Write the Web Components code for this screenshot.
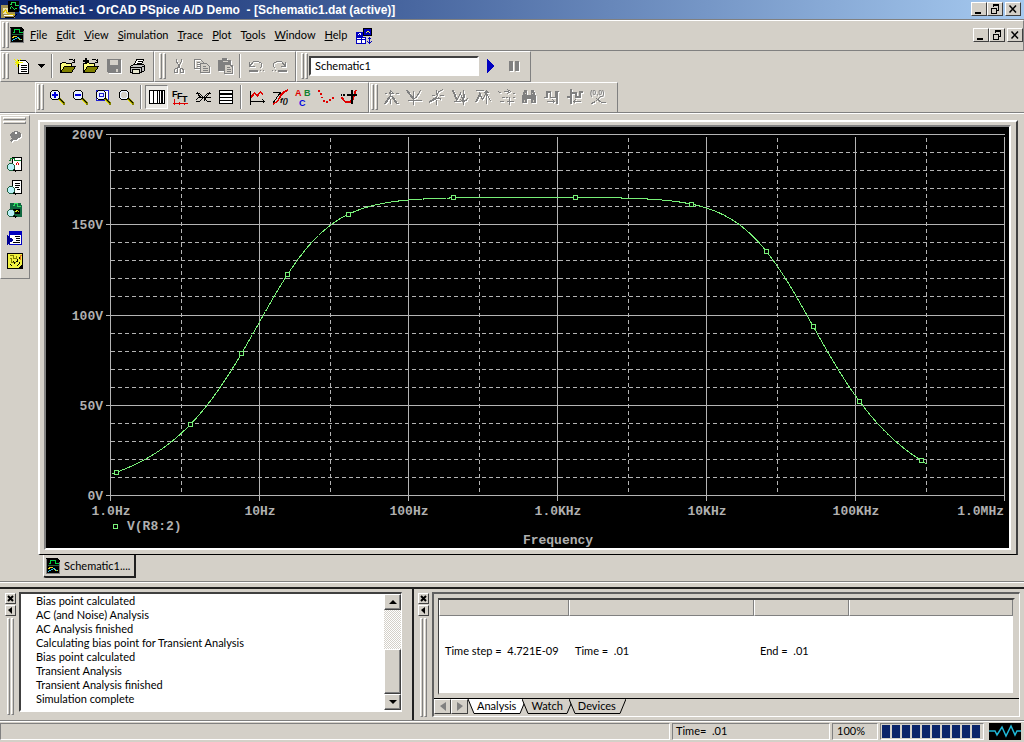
<!DOCTYPE html>
<html lang="en">
<head>
<meta charset="utf-8">
<title>Schematic1 - OrCAD PSpice A/D Demo</title>
<style>
html,body{margin:0;height:100%}
body{background:#d4d0c8;color:#000;font:11px/14px Lato,"Liberation Sans",Arial,sans-serif}
</style>
</head>
<body>
<pspice-app></pspice-app>
<script>
const define=(name,css,html,setup)=>{
  const t=document.createElement('template');
  t.innerHTML=`<style>*{box-sizing:border-box}button{font:inherit;color:inherit;border:0;padding:0;margin:0;background:none}${css}</style>${html}`;
  customElements.define(name,class extends HTMLElement{
    constructor(){super();this.attachShadow({mode:'open'}).append(t.content.cloneNode(true));}
    connectedCallback(){if(setup)setup.call(this,this.shadowRoot);}
  });
};

/* icon drawing helpers: fl = filled area, ln = one pixel pen with optional fill, tx = small lettering */
const fl=(c,d)=>`<path fill="${c}" d="${d}"/>`;
const ln=(c,d,fill='none',w=1)=>`<path transform="translate(.5 .5)" stroke="${c}" stroke-width="${w}" fill="${fill}" d="${d}"/>`;
const tx=(c,x,y,s,t,f='bold',fam='Liberation Sans')=>`<text x="${x}" y="${y}" fill="${c}" style="font:${f} ${s}px '${fam}',sans-serif">${t}</text>`;
const K='#000',G='#808080',W='#fff',R='#e00000',B='#0000c0';
const lens=inner=>fl('#808000','M9 9H11L16 14V16H14L9 11Z')+ln(K,'M10 9L15 14')+ln('#e8e000','M10 11L14 15')+`<circle cx="6" cy="6" r="5" fill="#e8f0ff" stroke="#000"/>`+inner;
const folder=ln(K,'M0 14V5H1L2 4H5L6 5H11V8','#ffff80')+ln(K,'M0 14L4 8H15L11 14Z','#808000')+ln(K,'M8 2L9 1H12L14 3M14 0V4H11');
const doc=fl(K,'M0 0H11L14 3V16H0Z')+ln(G,'M0 0V15H13V3')+ln('#00d040','M2 5H4V2H9V5H12')+ln('#206040','M1 7H12')+ln('#e0d020','M2 10L4 9H6L9 12H11')+ln('#20c0f0','M2 13L5 11L8 10L11 13');
const tinyLens=ln(K,'M6 13L9 15',K,2)+`<circle cx="4" cy="11" r="3.5" fill="#b8f0f8" stroke="#206040"/>`;
const icons={
 doc,
 app:fl('#a09050','M0 4H14V17H0Z')+fl(K,'M7 0H18V11H7Z')+ln('#20d050','M8 3H10V1H14V4H17M8 8L10 5L13 8L16 6')+fl('#e8e0b0','M2 7H7V13H2Z')+ln(W,'M2 14H11')+ln('#e0c000','M1 12L4 8L6 12L9 13H13')+ln(K,'M3 16H12L15 13'),
 mdi:fl(B,'M7 0H16V7H7Z')+ln(K,'M7 0H15V7H7Z')+ln('#ffff40','M9 5L11 3H12L14 5')+fl(B,'M0 4H7V9H0Z')+ln(W,'M1 7L3 5L5 6')+ln(B,'M0 9H9V15H0ZM0 11H9M5 9V15',W)+ln(B,'M13 9V15M11 11L13 9L15 11M11 13L13 15L15 13'),
 new:ln(K,'M4 2H11L14 5V15H4Z',W)+ln(K,'M6 7H12M6 9H12M6 11H12M6 13H12')+ln('#f0f000','M3 0V8M0 4H8M0 1L6 7M6 1L0 7'),
 drop:fl(K,'M4 6H12L8 10Z'),
 open:folder,
 append:folder+fl(K,'M0 2H2V0H4V2H6V4H4V6H2V4H0Z'),
 save:fl(G,'M1 1H15V15H2L1 14Z')+fl('#d4d0c8','M4 2H12V7H4Z')+fl('#d4d0c8','M10 11H12V14H10Z'),
 print:ln(K,'M5 6L7 1H14L12 6',W)+ln(K,'M8 3H12M7 5H11')+ln(K,'M1 8L4 6H14L15 7V12L12 14H1Z','#c0c0c0')+ln(K,'M1 9H12V14M12 9L15 7')+ln(K,'M3 11H10V15H3Z','#e8e8d0'),
 cut:ln(G,'M5 0V3L9 10M10 0V3L6 10')+ln(G,'M4 10H6V14H3V11ZM9 10H11L12 12V14H9Z'),
 copy:ln(G,'M0 1H6L9 4V10H0Z')+ln(G,'M2 4H5M2 6H6M2 8H6')+ln(G,'M6 5H12L15 8V14H6Z','#d4d0c8')+ln(G,'M8 8H11M8 10H13M8 12H13'),
 paste:fl(G,'M1 2H5V0H10V2H14V7H16V15H8V13H1Z')+ln('#d4d0c8','M5 3H10')+ln(G,'M7 6H12L15 9V15H7Z','#d4d0c8')+ln(G,'M9 9H12M9 11H13M9 13H13'),
 undo:ln(G,'M1 3V8H6M1 8L5 3H10L13 5V8L11 10')+ln(G,'M0 12H9M11 12H12M14 12H15M0 13H9'),
 redo:ln(G,'M14 3V8H9M14 8L10 3H5L2 5V8L4 10')+ln(G,'M6 12H15M0 12H1M3 12H4M6 13H15'),
 play:fl('#0000c0','M4 1L12 8L4 15Z'),
 pause:fl(G,'M3 3H7V13H3ZM9 3H13V13H9Z'),
 zin:lens(fl('#0000e0','M3 5H5V3H7V5H9V7H7V9H5V7H3Z')),
 zout:lens(fl('#0000e0','M3 5H9V7H3Z')),
 zarea:ln('#2020d0','M1 1H13V11H1Z',W)+lens(ln('#2020d0','M4 4H8V7H4Z')),
 zfit:lens(fl('#d4d0c8','M3 4H4V3H8V4H9V8H8V9H4V8H3Z')),
 logx:ln(K,'M0 1H15V14H0Z',W)+ln(K,'M4 1V14M8 1V14M10 1V14M12 1V14M13 1V14'),
 fft:ln(R,'M0 14H15M2 9V15M7 12V15M12 13V15')+tx(K,0,8,9,'F')+tx(K,5,10,9,'F')+tx(K,10,13,9,'T'),
 perf:ln(K,'M0 4L4 4L12 12H15M0 12H4L12 4H15M2 3L5 9M14 3L8 12M1 10L7 5M4 8H15'),
 logy:ln(K,'M1 1H14V14H1Z',W)+ln(K,'M1 4H14M1 5H14M1 8H14M1 11H14'),
 trace:ln(K,'M1 1V15M0 12H15M13 10L15 12L13 14')+fl(R,'M2 7L5 3H6L8 6L11 2H12L14 5V7L11.500 4L8.500 8H8L5.500 5L3 9H2Z'),
 eval:ln(K,'M0 3H7M0 14L8 3M8 3V8M3 3H8')+fl(R,'M1 14L5 12L9 4L12 2L16 0V2L12 4L10 6L6 13L1 16Z')+tx(K,8,14,8,'f()','italic bold'),
 label:tx('#e00000',0,7,9,'A')+tx('#108030',9,7,9,'B')+tx('#0000e0',4,17,9,'C'),
 pts:fl(R,'M0 1H2V3H0ZM2 4H4V6H2ZM3 8H5V9H3ZM5 11H7V13H5ZM8 12H10V14H8ZM11 10H13V12H11ZM14 8H16V10H14Z'),
 cursor:fl(R,'M0 8H2L4 12H8L11 9L14 1H16L13 10L9 14H4L1 11Z')+fl(K,'M10 1H12V5H16V7H12V15H10V7H6V5H10ZM0 5H1V7H0ZM2 5H4V7H2Z'),
 c1:ln(G,'M1 4H3M5 4H10M12 4H15M7 0V7M7 7L2 14H0M8 7L13 14H15M7 2L5 5M8 2L10 5M7 9V14M6 7L1 14M9 7L14 14'),
 c2:ln(G,'M1 11H15M7 1V15M0 1L6 9M1 1L7 9M14 1L9 9M4 6L7 10L11 6'),
 c3:ln(G,'M7 0V5M7 10V15M0 12L7 8L9 2L14 0M0 13L7 9M2 6H5M10 6H14M9 8L12 11M3 9H11'),
 c4:ln(G,'M0 1L4 11L8 4L11 12M1 1L5 11M1 12H8M11 0V15M8 10L11 13L15 9M12 4V8M9 11H14'),
 c5:ln(G,'M0 13L4 4L7 10L11 3L15 12M1 13L5 4M0 1H8M11 0V14M8 4L11 1L14 4M9 3H13'),
 c6:ln(G,'M0 2L3 4M3 8H6M5 2H10M9 0L12 2L9 4M9 1H10M9 3H10M1 12H5M7 8H9M8 12H15M11 7V15M14 4H16M14 8H16'),
 find:fl(G,'M3 1H6V6H10V1H13L15 8V14H10V10H6V14H1V8Z')+ln('#d4d0c8','M3 10V12M12 10V12M4 3V4M11 3V4'),
 c8:fl(G,'M0 8H2V2H7V8H11V2H15V3H14V15H12V9H6V4H4V9H0Z')+ln(G,'M2 12H10M8 10L10 12L8 14'),
 c9:fl(G,'M3 0H5V15H3V9H0V7H3V3H10V7H12V2H16V4H14V9H8V5H5V3H3Z')+ln(G,'M6 12H13M8 10L6 12L8 14'),
 c10:tx(G,0,6,7,'(0,0)')+ln(G,'M1 14L5 12L9 8L12 6M6 9L11 13H15'),
 pin:`<ellipse cx="9" cy="7" rx="5" ry="4" fill="#808080"/>`+fl(W,'M8 4H10V6H8Z')+ln(G,'M3 6L6 10L10 11M6 10L3 13','none',2),
 view1:ln(K,'M5 1H14V14H5Z',W)+ln('#108030','M1 4H3V2H7V4H13')+ln(R,'M8 9L10 6L12 9')+tinyLens,
 view2:ln(K,'M5 1H14V14H5Z',W)+ln(K,'M7 4H12M7 6H12M7 8H11M9 10H12')+tinyLens,
 view3:fl('#106840','M3 1H14L15 4V15H4Z')+ln('#30e060','M5 3H7V1H10V4H13')+fl(K,'M6 7H13V12H6Z')+ln('#d0e020','M8 9L10 8L12 10')+tinyLens,
 netlist:fl('#0000c0','M2 1H15V4H2Z')+ln('#0000c0','M2 4H14V14H2Z',W)+ln(K,'M7 6H12M8 8H12M8 10H12M5 12H12')+fl('#000090','M0 5L7 10L0 15Z'),
 sim:fl(K,'M0 0H16V16H0Z')+fl('#f0f040','M1 1H15V11L11 15H1Z')+ln('#808000','M2 2H6V5H9V2M2 5H4V9H8')+ln(K,'M6 8L8 11M10 5V8H8M3 11L5 13M12 8V10L9 13M12 3V5')+ln('#e07020','M12 2H14M13 2V6'),
};
customElements.define('px-icon',class extends HTMLElement{
 constructor(){super();this.attachShadow({mode:'open'});}
 connectedCallback(){const s=+this.getAttribute('size')||16;
  this.shadowRoot.innerHTML=`<style>:host{display:block;flex:none;width:${s}px;height:${s}px}:host([off]){filter:drop-shadow(1px 1px 0 #fff)}svg{display:block;overflow:visible}</style><svg width="${s}" height="${s}" viewBox="0 0 ${s} ${s}" shape-rendering="crispEdges" aria-hidden="true">${icons[this.getAttribute('name')]||''}</svg>`;}
});

define('tool-button',`:host{display:block;flex:none;width:23px;height:24px}:host([narrow]){width:15px}
button{width:100%;height:100%;display:grid;place-items:center}
button.on{border:1px solid;border-color:#808080 #fff #fff #808080;background:#ebe9e4}`,
`<button><px-icon></px-icon></button>`,function(r){
  const i=r.querySelector('px-icon'),b=r.querySelector('button'),n=this.getAttribute('icon');
  i.setAttribute('name',n);b.setAttribute('aria-label',this.getAttribute('label')||n);
  if(this.hasAttribute('off')){b.disabled=true;i.toggleAttribute('off',true);}
  if(this.hasAttribute('on')){b.className='on';b.setAttribute('aria-pressed','true');}
  i.connectedCallback();
});
define('tool-sep',`:host{display:block;flex:none;width:8px;padding:0 3px}div{height:24px;border-left:1px solid #808080;border-right:1px solid #fff}`,`<div></div>`);
define('grip-bar',`:host{display:flex;gap:1px;flex:none;width:7px}:host([flat]){flex-direction:column;width:auto;height:7px}
i{flex:1;border:1px solid;border-color:#fff #808080 #808080 #fff}`,`<i></i><i></i>`);
define('tool-band',`:host{display:flex;align-items:center;height:31px;padding:0 5px 2px 4px;border:1px solid;border-color:#fff #808080 #808080 #fff}
:host([first]){padding-left:1px}:host([wide]){flex:1;padding-right:0}
grip-bar{height:26px;margin-right:1px}:host([snug]){padding:0 8px 2px 1px}`,`<grip-bar></grip-bar><slot></slot>`);

define('caption-buttons',`:host{display:flex;flex:none}button{width:16px;height:14px;background:#d4d0c8;border:1px solid;border-color:#fff #404040 #404040 #fff;display:grid;place-items:center}
button:last-child{margin-left:2px}svg{display:block}`,
`<button aria-label="Minimize"><svg width="12" height="10"><path d="M2 8H8V10H2Z"/></svg></button><button aria-label="Restore"><svg width="12" height="10" fill="none" stroke="#000" shape-rendering="crispEdges"><path d="M4 1H10M4 2.5V.5M4.5 2V.5H9.5V6H7M2.5 4H7.5V9.5H2.5ZM2 4.5H8"/></svg></button><button aria-label="Close"><svg width="12" height="10"><path stroke="#000" stroke-width="1.5" d="M2.500 1.500L9 8.500M9 1.500L2.500 8.500"/></svg></button>`);
define('title-bar',`:host{display:flex;align-items:center;height:19px;padding:0 3px 0 1px;color:#fff;background:linear-gradient(90deg,#0a246a,#a6caf0)}
h1{flex:1;margin:0;font:bold 12px/16px "Liberation Sans",Arial,sans-serif;white-space:pre;overflow:hidden}caption-buttons{margin-bottom:2px}`,
`<px-icon name="app" size="18"></px-icon><h1><slot></slot></h1><caption-buttons></caption-buttons>`);
define('menu-bar',`:host{display:flex;border-top:1px solid #808080}nav{display:flex;flex:1;gap:9px;padding:0 4px}button{height:18px}
nav px-icon{margin-top:2px}`,
`<tool-band wide first><px-icon name="doc"></px-icon><nav><button><u>F</u>ile</button><button><u>E</u>dit</button><button><u>V</u>iew</button><button><u>S</u>imulation</button><button><u>T</u>race</button><button><u>P</u>lot</button><button>T<u>o</u>ols</button><button><u>W</u>indow</button><button><u>H</u>elp</button><px-icon name="mdi"></px-icon></nav><caption-buttons></caption-buttons></tool-band>`);
const tb=(list,off)=>list.split(' ').map(n=>`<tool-button icon="${n}"${off?' off':''}></tool-button>`).join('');
define('tool-rows',`:host{display:block;border-bottom:1px solid #fff}div{display:flex}.second{padding-left:35px;box-shadow:inset 0 -1px #808080}
input{width:170px;height:20px;padding:0 4px;border:2px solid;border-color:#404040 #fff #fff #404040;background:#fff;font:inherit;outline:0}`,
`<div><tool-band first>${tb('new')}<tool-button narrow icon="drop" label="New options"></tool-button><tool-sep></tool-sep>${tb('open append')}${tb('save',1)}${tb('print')}</tool-band>
<tool-band>${tb('cut copy paste',1)}<tool-sep></tool-sep>${tb('undo redo',1)}</tool-band>
<tool-band><input aria-label="Simulation profile" value="Schematic1">${tb('play')}${tb('pause',1)}</tool-band></div>
<div class="second"><tool-band snug>${tb('zin zout zarea zfit')}<tool-sep></tool-sep><tool-button icon="logx" on></tool-button>${tb('fft perf logy')}<tool-sep></tool-sep>${tb('trace eval label pts cursor')}</tool-band>
<tool-band snug>${tb('c1 c2 c3 c4 c5 c6 find c8 c9 c10',1)}</tool-band></div>`);

define('side-bar',`:host{display:flex;flex-direction:column;align-items:center;align-self:flex-start;flex:none;width:30px;margin-top:1px;padding:1px 1px 6px 0;border:1px solid;border-color:#fff #808080 #808080 #fff}
grip-bar{align-self:stretch;margin:0 2px}tool-button{height:23px}.g{display:flex;flex-direction:column}.g+.g{margin-top:5px}`,
`<grip-bar flat></grip-bar><div class="g">${tb('pin',1)}</div><div class="g">${tb('view1 view2 view3')}</div><div class="g">${tb('netlist sim')}</div>`);

/* Frequency response chart, redrawn to the size of its box */
define('bode-plot',`:host{display:block;flex:1;min-height:200px;background:#000;overflow:hidden;position:relative}
svg{position:absolute;inset:0;width:100%;height:100%}
text{font:bold 13px "Liberation Mono","Courier New",monospace;fill:#b0b0b0}`,`<svg role="img" aria-label="V(R8:2) against frequency"></svg>`,function(r){
 const svg=r.querySelector('svg');
 const gain=f=>165.3/Math.hypot(1,14/f)/Math.hypot(1,f/36000)/Math.hypot(1,f/600000);
 const draw=()=>{
  const w=this.clientWidth,h=this.clientHeight,L=64,T=7,X=w-5,Y=h-53,px=Math.round;
  const x=d=>px(L+(X-L)*d/6),y=v=>px(Y-(Y-T)*v/200);
  let solid='',dash='',txt='';
  for(let v=0;v<=200;v+=10){
   if(v%50)dash+=`M${L} ${y(v)}H${X}`;
   else{solid+=`M${L-5} ${y(v)}H${X}`;txt+=`<text x="${L-7}" y="${y(v)+5}" text-anchor="end">${v}V</text>`;}
  }
  ['1.0Hz','10Hz','100Hz','1.0KHz','10KHz','100KHz','1.0MHz'].forEach((t,d)=>{
   solid+=`M${x(d)} ${T+2}V${Y+5}`;
   if(d<6)dash+=`M${x(d+.477)} ${T+3}V${Y}`;
   txt+=d<6?`<text x="${x(d)+1}" y="${Y+20}" text-anchor="middle">${t}</text>`:`<text x="${X}" y="${Y+20}" text-anchor="end">${t}</text>`;
  });
  const span=X-L,logf=p=>(p-L)/span*6;let curve='';
  for(let p=L+2;p<=x(5.477);p++)curve+=(curve?'L':'M')+p+' '+(Y-(Y-T)*gain(10**logf(p))/200).toFixed(1);
  const marks=[.04,.537,.879,1.188,1.597,2.302,3.121,3.899,4.403,4.718,5.027,5.443].map(d=>`<rect x="${x(d)-2}" y="${y(gain(10**d))-2}" width="4" height="4"/>`).join('');
  svg.innerHTML=`<g transform="translate(.5 .5)" fill="none" stroke="#b4b4b4" shape-rendering="crispEdges"><path d="${solid}"/><path stroke-dasharray="4 3" d="${dash}"/></g>
  <g transform="translate(.5 .5)" fill="none" stroke="#78f078" shape-rendering="crispEdges"><path d="${curve}"/><g fill="#000">${marks}<rect x="${L+3}" y="${Y+29}" width="4" height="4"/></g></g>${txt}
  <text x="${L+17}" y="${Y+35}">V(R8:2)</text><text x="${x(3)+1}" y="${Y+49}" text-anchor="middle">Frequency</text>`;
 };
 draw();new ResizeObserver(draw).observe(this);
});
define('plot-window',`:host{display:flex;flex-direction:column;flex:1;min-width:0;padding:6px 6px 3px 8px}
.frame{flex:1;display:flex;border:2px solid;border-color:#fff #404040 #000 #fff;border-bottom-width:1px;padding:3px 5px 4px 4px}
.sunk{flex:1;display:flex;border:2px solid;border-color:#808080 #fff #fff #808080}
button{display:flex;align-items:center;gap:2px;width:93px;height:23px;margin:0 0 0 5px;padding-left:2px;white-space:nowrap;border:solid;border-width:0 2px 2px 1px;border-color:#404040 #202020 #202020 #fff;border-radius:0 0 0 3px;background:#d4d0c8}`,
`<div class="frame"><div class="sunk"><bode-plot></bode-plot></div></div><button><px-icon name="doc"></px-icon>Schematic1....</button>`);

define('dock-handle',`:host{display:flex;flex-direction:column;align-items:center;flex:none;width:12px;gap:1px;padding-top:1px}
button{width:11px;height:11px;border:1px solid;border-color:#fff #404040 #404040 #fff;display:grid;place-items:center}grip-bar{flex:1;width:7px;margin-top:1px}svg{display:block}`,
`<button aria-label="Close panel"><svg width="7" height="7"><path stroke="#000" stroke-width="2" d="M1 1L6 6M6 1L1 6"/></svg></button><button aria-label="Collapse panel"><svg width="7" height="7"><path d="M5 0V7L1 3Z"/></svg></button><grip-bar></grip-bar>`);
define('output-log',`:host{display:flex;width:414px;flex:none;padding:3px 10px 5px 4px;gap:3px;border-right:2px solid #202020}
.box{flex:1;display:flex;margin-bottom:3px;background:#fff;border:solid;border-width:2px 1px 2px 2px;border-color:#404040 #fff #fff #404040}
ul{flex:1;margin:0;padding:0 0 0 15px;list-style:none;white-space:nowrap}
.bar{width:17px;display:flex;flex-direction:column;background:repeating-conic-gradient(#fff 0 25%,#d4d0c8 0 50%) 0 0/2px 2px}
.bar button,.thumb{background:#d4d0c8;border:1px solid;border-color:#fff #404040 #404040 #fff;box-shadow:inset -1px -1px #808080}
.bar button{height:16px;display:grid;place-items:center}.thumb{height:45px}.gap{flex:1}`,
`<dock-handle></dock-handle><div class="box"><ul><li>Bias point calculated<li>AC (and Noise) Analysis<li>AC Analysis finished<li>Calculating bias point for Transient Analysis<li>Bias point calculated<li>Transient Analysis<li>Transient Analysis finished<li>Simulation complete</ul><div class="bar"><button aria-label="Scroll up"><svg width="8" height="4"><path d="M0 4H8L4 0Z"/></svg></button><div class="gap"></div><div class="thumb"></div><button aria-label="Scroll down"><svg width="8" height="4"><path d="M0 0H8L4 4Z"/></svg></button></div></div>`);
define('sheet-tab',`:host{display:block;margin-right:-4px}:host([on]){--face:#fff}
button{display:flex;height:15px;line-height:14px;text-align:center}svg{display:block;flex:none}
span{padding:0 2px;background:var(--face,#d4d0c8);border-bottom:1px solid #000}path{fill:var(--face,#d4d0c8)}`,
`<button><svg width="7" height="15"><path d="M0 0L6 14H7V0"/><path style="fill:none" stroke="#000" d="M0 0L6 14.5H7"/></svg><span><slot></slot></span><svg width="8" height="15"><path d="M8 0L2 14H0V0"/><path style="fill:none" stroke="#000" d="M8 0L2 14.5H0"/></svg></button>`);
define('sim-panel',`:host{display:flex;flex:1;min-width:0;padding:3px 4px 3px 3px;gap:3px}
.box{flex:1;min-width:0;display:flex;flex-direction:column;border:2px solid;border-color:#606060 #fff #fff #606060;border-right-width:1px;border-bottom-width:1px;padding-top:4px}
.view{flex:1;margin:0 4px 3px 4px;background:#fff;border:2px solid;border-color:#404040 #d4d0c8 #d4d0c8 #404040;border-left-width:1px}
table{width:100%;border-collapse:separate;border-spacing:0;table-layout:fixed}
th{height:16px;padding:0;background:#d4d0c8;border:solid;border-width:0 1px 1px;border-color:#808080 #808080 #808080 #fff}
td{padding:28px 0 0 6px;white-space:pre;line-height:14px}
.tabs{display:flex;height:18px;padding-bottom:2px;border-top:1px solid #000}
.sc{width:17px;border:1px solid;border-color:#fff #404040 #404040 #fff;display:grid;place-items:center}
svg{display:block}`,
`<dock-handle></dock-handle><div class="box"><div class="view"><table><colgroup><col style="width:130px"><col style="width:185px"><col style="width:95px"><col></colgroup><thead><tr><th></th><th></th><th></th><th></th></tr></thead><tbody><tr><td>Time step =  4.721E-09</td><td>Time =  .01</td><td>End =  .01</td><td></td></tr></tbody></table></div>
<div class="tabs"><button class="sc" disabled aria-label="Previous tab"><svg width="6" height="9"><path fill="#808080" d="M6 0V9L0 4Z"/></svg></button><button class="sc" disabled aria-label="Next tab"><svg width="6" height="9"><path fill="#808080" d="M0 0V9L6 4Z"/></svg></button><sheet-tab on>Analysis</sheet-tab><sheet-tab>Watch</sheet-tab><sheet-tab>Devices</sheet-tab></div></div>`);

define('status-bar',`:host{display:flex;gap:2px;height:22px;padding:2px 3px 3px 0;border-top:1px solid #808080;box-shadow:inset 0 1px #fff}
div{height:17px;line-height:14px;padding-left:3px;border:1px solid;border-color:#808080 #fff #fff #808080;white-space:pre}
.msg{flex:1}.time{width:158px}.pct{width:46px;padding-left:4px}.prog{width:104px;padding:1px;display:flex;gap:2px}.prog i{width:8px;background:#0a246a}svg{display:block;margin-left:3px;background:#000}`,
`<div class="msg"></div><div class="time">Time=  .01</div><div class="pct">100%</div><div class="prog" role="progressbar" aria-label="Simulation progress" aria-valuenow="100">${'<i></i>'.repeat(10)}</div><svg width="32" height="17"><path d="M0 8H6L8 12L13 4L17 13L22 3L26 12L28 8H32" fill="none" stroke="#20b8d8" stroke-width="1.5"/></svg>`);

define('pspice-app',`:host{display:flex;flex-direction:column;min-height:100vh}main{flex:1;display:flex}
.dock{display:flex;height:133px;border-top:2px solid #202020;flex:none}.split{height:6px;border-top:1px solid #808080;box-shadow:inset 0 1px #fff;flex:none}`,
`<title-bar>Schematic1 - OrCAD PSpice A/D Demo  - [Schematic1.dat (active)]</title-bar><menu-bar></menu-bar><tool-rows></tool-rows><main><side-bar></side-bar><plot-window></plot-window></main><div class="split"></div><div class="dock"><output-log></output-log><sim-panel></sim-panel></div><status-bar></status-bar>`);
</script>
</body>
</html>
